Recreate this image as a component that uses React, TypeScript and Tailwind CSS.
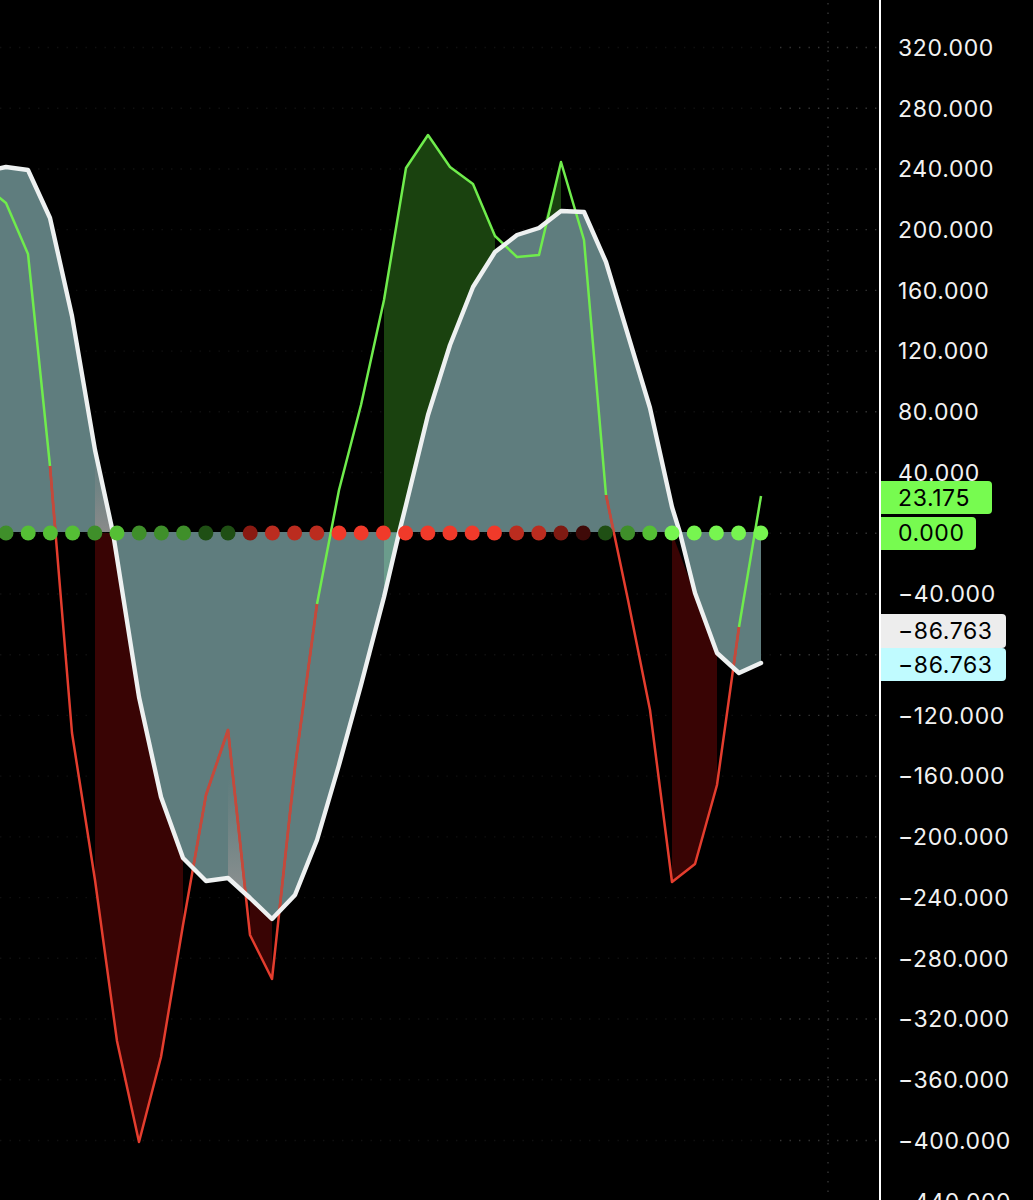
const WHITE: [number, number][] = [[-16,172],[6,167],[28,170],[50,218],[72,316],[95,450],[113,533],[117,558],[139,697],[161,797],[183,858],[206,881],[228,878],[250,898],[272,919],[295,895],[317,840],[339,765],[361,685],[384,597],[399,533],[406,505],[428,415],[450,345],[473,287],[495,252],[517,235],[539,228],[561,211],[584,212],[606,262],[628,335],[650,408],[672,507],[680,533],[695,593],[717,653],[739,673],[761,663]];
const COLORED: [number, number][] = [[-16,185],[6,203],[28,254],[50,466],[72,733],[95,880],[117,1041],[139,1142],[161,1057],[183,925],[206,795],[228,730],[250,935],[272,979],[295,767],[317,604],[339,490],[361,405],[384,300],[406,168],[428,135],[450,167],[473,184],[495,236],[517,257],[539,255],[561,162],[584,240],[606,495],[628,600],[650,710],[672,882],[695,864],[717,785],[739,627],[761,496]];
const dotColors = ["#3f8f2a","#55bf35","#55bf35","#55bf35","#3f8f2a","#55bf35","#3f8f2a","#3f8f2a","#3f8f2a","#1f4f14","#1f4f14","#8a1a12","#bb2c1f","#bb2c1f","#bb2c1f","#f03a2a","#f03a2a","#f03a2a","#f03a2a","#f03a2a","#f03a2a","#f03a2a","#f03a2a","#bb2c1f","#bb2c1f","#7f1a12","#3f0a08","#1f4f14","#3f8f2a","#55bf35","#77f550","#77f550","#77f550","#77f550","#77f550"];
const labels = ["320.000","280.000","240.000","200.000","160.000","120.000","80.000","40.000","","−40.000","","−120.000","−160.000","−200.000","−240.000","−280.000","−320.000","−360.000","−400.000","−440.000"];
const pts = (p: [number, number][]) => p.map(([x, y]) => `${x},${y}`).join(" ");
const ZERO = 532;
const teal = `-16,${ZERO} ${pts(WHITE)} 761,${ZERO}`;
const seg = (p: [number, number][], a: number, b: number) => pts(p.filter(([x]) => x >= a && x <= b));
const gridY = Array.from({ length: 20 }, (_, i) => 47.5 + i * 60.72);
const DASH = "1.4 8.1";

function Badge({ text, bg, top, w, h }: { text: string; bg: string; top: string; w: string; h: string }) {
  return <div className={`absolute left-0 ${top} ${w} ${h} ${bg} flex items-center rounded-r-[4px] pl-[17px] pt-[1px] text-black`}>{text}</div>;
}

export default function App() {
  return (
    <div className="flex h-[1200px] w-[1033px] overflow-hidden bg-black font-['Inter',sans-serif]">
      <svg viewBox="0 0 879 1200" className="h-[1200px] w-[879px] shrink-0">
        <defs>
          <linearGradient id="wedgeA" x1="0" x2="0" y1="0" y2="1">
            <stop offset="0" stopColor="#7f8a8a" stopOpacity="0.2" />
            <stop offset="1" stopColor="#8a8a8a" />
          </linearGradient>
          <linearGradient id="wedgeB" x1="0" x2="0" y1="0" y2="1">
            <stop offset="0.3" stopColor="#7f8a8a" stopOpacity="0" />
            <stop offset="1" stopColor="#8c9090" />
          </linearGradient>
          <clipPath id="tealClip">
            <polygon points={teal} />
          </clipPath>
        </defs>
        {gridY.map((y) => (
          <g key={y}>
            <line x1="0" x2="778" y1={y} y2={y} stroke="#111111" strokeWidth="1.4" strokeDasharray={DASH} />
            <line x1="780" x2="878" y1={y} y2={y} stroke="#353535" strokeWidth="1.4" strokeDasharray={DASH} />
          </g>
        ))}
        <line x1="828" x2="828" y1="3" y2="1200" stroke="#353535" strokeWidth="1.4" strokeDasharray={DASH} />
        <polygon points="95,533 113,533 183,858 183,925 161,1057 139,1142 117,1041 95,880" fill="#390404" />
        <polygon points="250,898 272,919 272,979 250,935" fill="#390404" />
        <polygon points="672,533 717,653 717,785 695,864 672,882" fill="#390404" />
        <polygon points="384,300 406,168 428,135 450,167 473,184 495,236 495,252 473,287 450,345 428,415 406,505 399,533 384,533" fill="#1a420f" />
        <polygon points="561,162 561,211 544,224" fill="#1a420f" />
        <polygon points={teal} fill="#5f7d7e" />
        <polygon points="95,460 98,466 113,532 95,532" fill="url(#wedgeA)" />
        <polygon points="228,730 245,892 228,878" fill="url(#wedgeB)" />
        <polygon points="384,533 399,533 384,597" fill="#6b9c8c" />
        <polyline points={seg(COLORED, -16, 50)} fill="none" stroke="#6fec4c" strokeWidth="2.5" strokeLinejoin="round" />
        <polyline points={seg(COLORED, 50, 317)} fill="none" stroke="#e43d2e" strokeWidth="2.5" strokeLinejoin="round" />
        <polyline points={seg(COLORED, 606, 739)} fill="none" stroke="#e43d2e" strokeWidth="2.5" strokeLinejoin="round" />
        <g clipPath="url(#tealClip)">
          <polyline points={seg(COLORED, 50, 317)} fill="none" stroke="#c24a3c" strokeWidth="2.5" strokeLinejoin="round" />
          <polyline points={seg(COLORED, 606, 739)} fill="none" stroke="#c24a3c" strokeWidth="2.5" strokeLinejoin="round" />
        </g>
        <polyline points={seg(COLORED, 317, 606)} fill="none" stroke="#6fec4c" strokeWidth="2.5" strokeLinejoin="round" />
        <polyline points={seg(COLORED, 739, 761)} fill="none" stroke="#6fec4c" strokeWidth="2.5" strokeLinejoin="round" />
        <polyline points={pts(WHITE)} fill="none" stroke="#eef1f1" strokeWidth="4.4" strokeLinejoin="round" strokeLinecap="round" />
        {dotColors.map((c, i) => (
          <circle key={i} cx={6 + i * 22.2} cy="533" r="7.5" fill={c} />
        ))}
      </svg>
      <div className="relative h-[1200px] flex-1 border-l-2 border-white text-[23px] leading-none tracking-[0.6px] text-[#f2f2f2]">
        <div className="flex flex-col pt-[18px]">
          {labels.map((l, i) => (
            <div key={i} className="flex h-[60.72px] shrink-0 items-center pl-[17px]">{l}</div>
          ))}
        </div>
        <Badge text="23.175" bg="bg-[#77fb50]" top="top-[481px]" w="w-[111px]" h="h-[33px]" />
        <Badge text="0.000" bg="bg-[#77fb50]" top="top-[516.5px]" w="w-[95px]" h="h-[33px]" />
        <Badge text="−86.763" bg="bg-[#ededed]" top="top-[614px]" w="w-[125px]" h="h-[34px]" />
        <Badge text="−86.763" bg="bg-[#c0fbff]" top="top-[648px]" w="w-[125px]" h="h-[33px]" />
      </div>
    </div>
  );
}
